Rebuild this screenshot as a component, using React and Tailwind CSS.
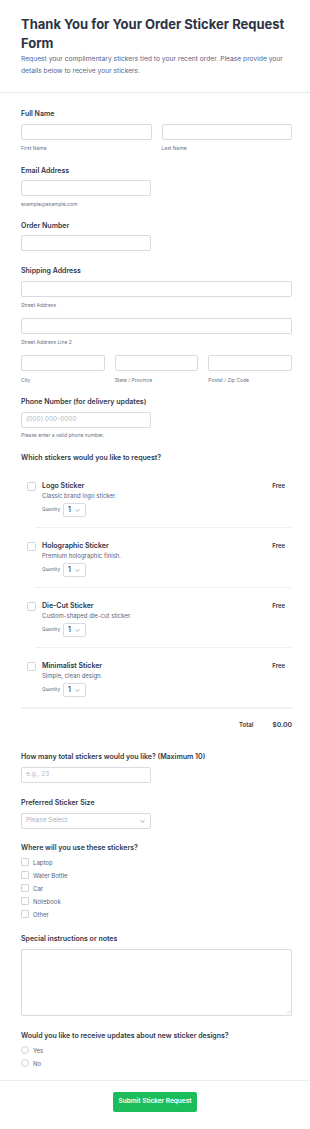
import React from 'react';

const font = { fontFamily: 'Inter, "Noto Sans", sans-serif' };

function Chevron({ className = '' }) {
  return (
    <svg viewBox="0 0 10 6" className={className} fill="none" stroke="currentColor" strokeWidth="1.4" strokeLinecap="round" strokeLinejoin="round">
      <path d="M1.5 1.2 5 4.6 8.5 1.2" />
    </svg>
  );
}

function Label({ children, className = '' }) {
  return <div className={`text-[7px] leading-[10px] font-semibold text-[#323748] ${className}`}>{children}</div>;
}

function Sub({ children, className = '' }) {
  return <div className={`text-[5px] leading-[8px] text-[#6a7389] ${className}`}>{children}</div>;
}

function Input({ className = '', placeholder }) {
  return (
    <div className={`h-[16px] border border-[#d8dbe3] rounded-[2px] bg-white flex items-center px-[4px] ${className}`}>
      {placeholder && <span className="text-[6.5px] text-[#b3b9c6]">{placeholder}</span>}
    </div>
  );
}

const stickers = [
  { name: 'Logo Sticker', desc: 'Classic brand logo sticker.' },
  { name: 'Holographic Sticker', desc: 'Premium holographic finish.' },
  { name: 'Die-Cut Sticker', desc: 'Custom-shaped die-cut sticker.' },
  { name: 'Minimalist Sticker', desc: 'Simple, clean design.' },
];

const places = ['Laptop', 'Water Bottle', 'Car', 'Notebook', 'Other'];

export default function App() {
  return (
    <div className="w-[310px] min-h-[1129px] bg-white" style={font}>
      {/* Header */}
      <div className="pl-[21px] pr-[18px] pt-[15px] pb-[15px] border-b border-[#e6e8ee]">
        <h1 className="text-[13px] leading-[19px] font-bold text-[#2c3345]">
          Thank You for Your Order Sticker Request Form
        </h1>
        <p className="text-[6.7px] leading-[12px] text-[#57648a]">
          Request your complimentary stickers tied to your recent order. Please provide your details below to receive your stickers.
        </p>
      </div>

      {/* Form */}
      <div className="pl-[21px] pr-[18px] pt-[16px]">
        <Label>Full Name</Label>
        <div className="mt-[5px] grid grid-cols-2 gap-[10px]">
          <div>
            <Input />
            <Sub className="mt-[4px]">First Name</Sub>
          </div>
          <div>
            <Input />
            <Sub className="mt-[4px]">Last Name</Sub>
          </div>
        </div>

        <Label className="mt-[14px]">Email Address</Label>
        <Input className="mt-[4px] w-[130px]" />
        <Sub className="mt-[4px]">example@example.com</Sub>

        <Label className="mt-[13px]">Order Number</Label>
        <Input className="mt-[4px] w-[130px]" />

        <Label className="mt-[15px]">Shipping Address</Label>
        <Input className="mt-[5px]" />
        <Sub className="mt-[4px]">Street Address</Sub>
        <Input className="mt-[9px]" />
        <Sub className="mt-[4px]">Street Address Line 2</Sub>
        <div className="mt-[9px] grid grid-cols-3 gap-[10px]">
          {['City', 'State / Province', 'Postal / Zip Code'].map((s) => (
            <div key={s}>
              <Input />
              <Sub className="mt-[5px]">{s}</Sub>
            </div>
          ))}
        </div>

        <Label className="mt-[13px]">Phone Number (for delivery updates)</Label>
        <Input className="mt-[5px] w-[130px]" placeholder="(000) 000-0000" />
        <Sub className="mt-[3px]">Please enter a valid phone number.</Sub>

        <Label className="mt-[14px]">Which stickers would you like to request?</Label>
        <div className="mt-[5px]">
          {stickers.map((s, i) => (
            <div key={s.name}>
              <div className="flex pt-[13px] pb-[10px] pl-[6px]">
                <div className="w-[9px] h-[9px] mt-[0.5px] border border-[#cdd2dc] rounded-[1.5px] bg-white shrink-0" />
                <div className="ml-[6px] flex-1">
                  <div className="flex justify-between pr-[7px]">
                    <span className="text-[7px] leading-[10px] font-semibold text-[#2c3345]">{s.name}</span>
                    <span className="text-[6px] leading-[10px] font-semibold text-[#2c3345]">Free</span>
                  </div>
                  <div className="text-[6px] leading-[10px] text-[#57647e]">{s.desc}</div>
                  <div className="mt-[2px] flex items-center">
                    <span className="text-[4.5px] text-[#57647e]">Quantity</span>
                    <div className="ml-[3px] w-[23px] h-[14px] border border-[#d8dbe3] rounded-[2px] flex items-center pl-[4px]">
                      <span className="text-[7px] font-medium text-[#2c3345]">1</span>
                      <Chevron className="ml-[4px] w-[5px] h-[3px] text-[#8a92a6]" />
                    </div>
                  </div>
                </div>
              </div>
              {i < stickers.length - 1 ? (
                <div className="ml-[14px] border-b border-dotted border-[#dfe2e8]" />
              ) : (
                <div className="h-[2px] bg-[#eef0f3]" />
              )}
            </div>
          ))}
        </div>

        <div className="mt-[11px] flex justify-end items-center leading-[10px] font-semibold text-[#2c3345]">
          <span className="text-[6px]">Total</span>
          <span className="ml-[19px] text-[6.8px]">$0.00</span>
        </div>

        <Label className="mt-[22px]">How many total stickers would you like? (Maximum 10)</Label>
        <Input className="mt-[5px] w-[130px]" placeholder="e.g., 23" />

        <Label className="mt-[15px]">Preferred Sticker Size</Label>
        <div className="mt-[5px] w-[130px] h-[16px] border border-[#d8dbe3] rounded-[2px] flex items-center justify-between px-[4px]">
          <span className="text-[6.5px] text-[#a9b0c4]">Please Select</span>
          <Chevron className="w-[5px] h-[3px] text-[#6a7389] mr-[1px]" />
        </div>

        <Label className="mt-[14px]">Where will you use these stickers?</Label>
        <div className="mt-[2.5px]">
          {places.map((p) => (
            <div key={p} className="h-[13px] flex items-center">
              <div className="w-[8px] h-[8px] border border-[#cdd2dc] rounded-[1px] bg-white" />
              <span className="ml-[4px] text-[6px] text-[#57647e]">{p}</span>
            </div>
          ))}
        </div>

        <Label className="mt-[13.5px]">Special instructions or notes</Label>
        <div className="mt-[5px] h-[67px] border border-[#d8dbe3] rounded-[2px] relative">
          <svg viewBox="0 0 6 6" className="absolute right-[1px] bottom-[1px] w-[4px] h-[4px] text-[#b8bdc9]" stroke="currentColor" strokeWidth="0.8">
            <path d="M5.5 1 1 5.5M5.5 3.5 3.5 5.5" />
          </svg>
        </div>

        <Label className="mt-[15px]">Would you like to receive updates about new sticker designs?</Label>
        <div className="mt-[2.5px] pb-[10px]">
          {['Yes', 'No'].map((r) => (
            <div key={r} className="h-[13px] flex items-center">
              <div className="w-[8px] h-[8px] border border-[#cdd2dc] rounded-full bg-white" />
              <span className="ml-[4px] text-[6px] text-[#57647e]">{r}</span>
            </div>
          ))}
        </div>
      </div>

      <div className="border-t border-[#eceef2] pt-[11px] pb-[17px] flex justify-center">
        <button className="w-[84px] h-[20px] rounded-[2px] bg-[#1bbd5a] text-white text-[6.5px] font-semibold">
          Submit Sticker Request
        </button>
      </div>
    </div>
  );
}
